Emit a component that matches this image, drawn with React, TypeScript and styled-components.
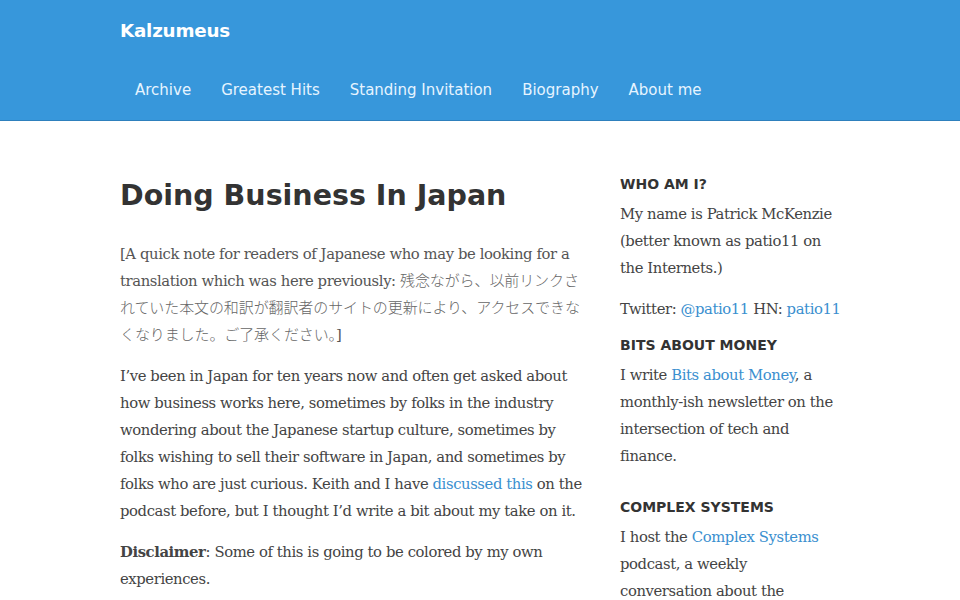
import React from "react";
import styled, { createGlobalStyle } from "styled-components";

const Global = createGlobalStyle`
  html, body { margin: 0; padding: 0; background: #fff; }
  body { font-family: "DejaVu Serif", "Noto Sans CJK JP", serif; }
  * { box-sizing: border-box; }
`;

const HEAD = `"DejaVu Sans", "Open Sans", sans-serif`;
const BODY = `"DejaVu Serif", "Noto Sans CJK JP", serif`;

const Header = styled.header`
  background: #3797db;
  border-bottom: 1px solid #2e80bd;
  height: 121px;
`;

const HeaderInner = styled.div`
  width: 720px;
  margin: 0 auto;
  display: flex;
  flex-direction: column;
`;

const Brand = styled.a`
  font-family: ${HEAD};
  font-weight: bold;
  font-size: 18.3px;
  color: #fff;
  text-decoration: none;
  padding-top: 20px;
  height: 62px;
  letter-spacing: -0.2px;
`;

const Nav = styled.nav`
  display: flex;
`;

const NavLink = styled.a`
  font-family: ${HEAD};
  font-size: 15px;
  color: #e6f4ff;
  text-decoration: none;
  padding: 19px 15px;
  line-height: 18px;
`;

const Container = styled.div`
  width: 720px;
  margin: 0 auto;
  display: flex;
  gap: 35px;
  padding-top: 53px;
`;

const Main = styled.main`
  width: 465px;
  flex: none;
`;

const Title = styled.h1`
  font-family: ${HEAD};
  font-weight: bold;
  font-size: 28.5px;
  color: #333;
  margin: 2px 0 24px;
  line-height: 40px;
`;

const P = styled.p<{ $light?: boolean; $nowrap?: boolean }>`
  font-family: ${BODY};
  font-size: 14.8px;
  letter-spacing: -0.4px;
  line-height: 27px;
  color: ${(p) => (p.$light ? "#555" : "#444")};
  white-space: ${(p) => (p.$nowrap ? "nowrap" : "normal")};
  margin: 0 0 14px;
`;

const Jp = styled.span`
  font-family: "Noto Sans CJK JP", sans-serif;
  font-size: 15px;
  letter-spacing: -0.1px;
  line-height: 16px;
  color: #666;
  font-weight: 300;
`;

const Link = styled.a`
  color: #3a8fcf;
  text-decoration: none;
`;

const Side = styled.aside`
  width: 220px;
  flex: none;
  padding-top: 1px;
`;

const Widget = styled.section<{ $gap: number }>`
  margin-bottom: ${(p) => p.$gap}px;
`;

const WTitle = styled.h3`
  font-family: ${HEAD};
  font-weight: bold;
  font-size: 14px;
  text-transform: uppercase;
  color: #333;
  margin: 0 0 7px;
  line-height: 18px;
`;

export default function App() {
  return (
    <>
      <Global />
      <Header>
        <HeaderInner>
          <Brand href="#">Kalzumeus</Brand>
          <Nav>
            <NavLink href="#">Archive</NavLink>
            <NavLink href="#">Greatest Hits</NavLink>
            <NavLink href="#">Standing Invitation</NavLink>
            <NavLink href="#">Biography</NavLink>
            <NavLink href="#">About me</NavLink>
          </Nav>
        </HeaderInner>
      </Header>
      <Container>
        <Main>
          <Title>Doing Business In Japan</Title>
          <P $light>
            [A quick note for readers of Japanese who may be looking for a translation which was here previously:{" "}
            <Jp>残念ながら、以前リンクされていた本文の和訳が翻訳者のサイトの更新により、アクセスできなくなりました。ご了承ください。</Jp>]
          </P>
          <P>
            I’ve been in Japan for ten years now and often get asked about how business works here, sometimes by folks in
            the industry wondering about the Japanese startup culture, sometimes by folks wishing to sell their software in
            Japan, and sometimes by folks who are just curious. Keith and I have <Link href="#">discussed this</Link> on
            the podcast before, but I thought I’d write a bit about my take on it.
          </P>
          <P>
            <strong>Disclaimer</strong>: Some of this is going to be colored by my own experiences.
          </P>
        </Main>
        <Side>
          <Widget $gap={0}>
            <WTitle>Who am I?</WTitle>
            <P>My name is Patrick McKenzie (better known as patio11 on the Internets.)</P>
            <P $nowrap>
              Twitter: <Link href="#">@patio11</Link> HN: <Link href="#">patio11</Link>
            </P>
          </Widget>
          <Widget $gap={29}>
            <WTitle>Bits about Money</WTitle>
            <P>
              I write <Link href="#">Bits about Money</Link>, a monthly-ish newsletter on the intersection of tech and
              finance.
            </P>
          </Widget>
          <Widget $gap={29}>
            <WTitle>Complex Systems</WTitle>
            <P>
              I host the <Link href="#">Complex Systems</Link> podcast, a weekly conversation about the intersection of
              tech and finance.
            </P>
          </Widget>
        </Side>
      </Container>
    </>
  );
}
